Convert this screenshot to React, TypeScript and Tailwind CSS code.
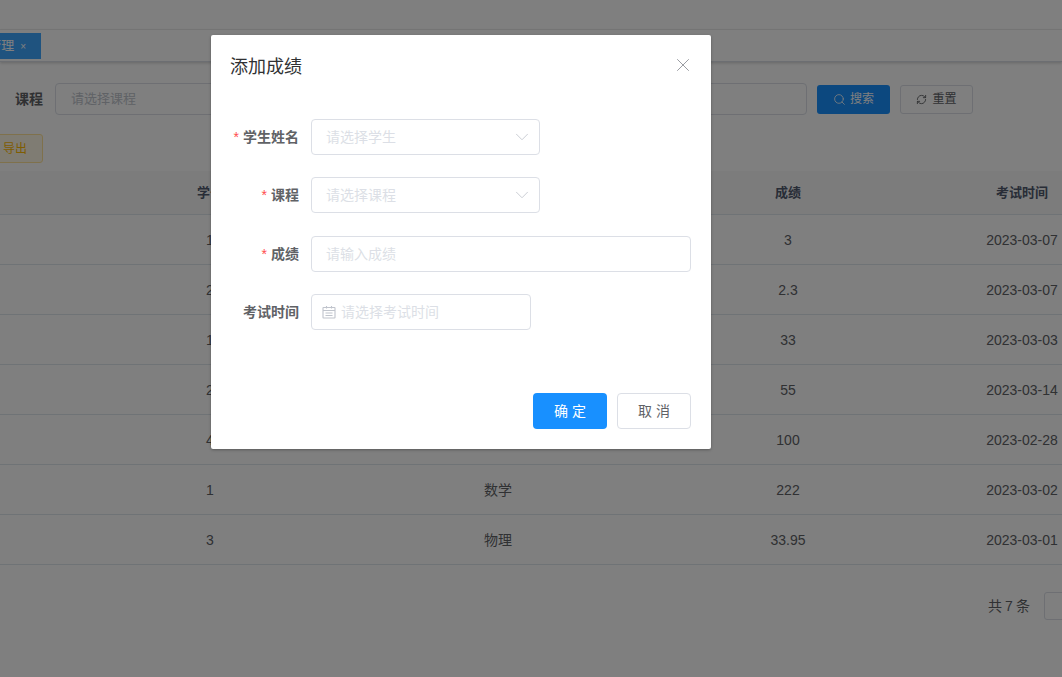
import { ChevronDown, X, Search, RefreshCw } from "lucide-react";

const rows = [
  { id: "1", course: "", score: "3", date: "2023-03-07" },
  { id: "2", course: "", score: "2.3", date: "2023-03-07" },
  { id: "1", course: "", score: "33", date: "2023-03-03" },
  { id: "2", course: "", score: "55", date: "2023-03-14" },
  { id: "4", course: "", score: "100", date: "2023-02-28" },
  { id: "1", course: "数学", score: "222", date: "2023-03-02" },
  { id: "3", course: "物理", score: "33.95", date: "2023-03-01" },
];

const gridCols = "grid grid-cols-[66px_288px_288px_292px_176px] items-center text-center";

const FormRow = ({
  label,
  required,
  className,
  children,
}: {
  label: string;
  required?: boolean;
  className: string;
  children: React.ReactNode;
}) => (
  <div className={`flex items-center ${className}`}>
    <label className="w-[88px] shrink-0 pr-3 text-right text-[14px] font-bold text-[#606266]">
      {required && <span className="mr-1 font-normal text-[#ff4d4f]">*</span>}
      {label}
    </label>
    {children}
  </div>
);

const DateIcon = () => (
  <svg width="14" height="14" viewBox="0 0 14 14" fill="none" stroke="#c0c4cc" strokeWidth="1.1" className="mr-[5px] shrink-0">
    <rect x="1" y="2.5" width="12" height="10.5" rx="0.5" />
    <path d="M1 5.5h12M4.5 1v2.5M9.5 1v2.5M3.5 8h7M3.5 10.5h7" />
  </svg>
);

export default function App() {
  return (
    <div className="relative h-[677px] w-[1062px] overflow-hidden bg-white font-['Liberation_Sans','Noto_Sans_CJK_SC',sans-serif] text-[14px] text-[#606266]">
      <div className="h-[30px] border-b border-[#f0f0f0]" />
      <div className="flex h-[32px] items-start border-b border-[#d8dce5] pt-[3px] shadow-[0_1px_3px_rgba(0,0,0,0.2)]">
        <div className="-ml-[42px] flex h-[26px] w-[83px] items-center justify-end whitespace-nowrap bg-[#3ea6ff] pr-[15px] text-[13px] text-white">
          成绩管理<span className="ml-[6px] text-[10px]">×</span>
        </div>
      </div>

      <div className="flex h-[72px] items-center pl-[15px] pt-[2px]">
        <span className="mr-3 text-[14px] font-bold text-[#606266]">课程</span>
        <div className="flex h-[32px] w-[752px] items-center rounded border border-[#dcdfe6] pl-[15px] text-[13px] text-[#c0c4cc]">
          请选择课程
        </div>
        <button className="ml-[10px] flex h-[29px] w-[73px] items-center justify-center gap-[4px] rounded-[3px] bg-[#1890ff] text-[12px] text-white">
          <Search size={13} strokeWidth={1.5} />
          搜索
        </button>
        <button className="ml-[10px] flex h-[29px] w-[73px] items-center justify-center gap-[5px] rounded-[3px] border border-[#dcdfe6] text-[12px] text-[#606266]">
          <RefreshCw size={11} />
          重置
        </button>
      </div>

      <div className="-ml-[30px] flex h-[29px] w-[73px] items-center justify-end rounded-[3px] border border-[#ffe399] bg-[#fff8e6] pr-[15px] text-[12px] text-[#ffba00]">
        导出
      </div>

      <div className="mt-[8px]">
        <div className={`${gridCols} h-[44px] border-b border-[#dfe6ec] bg-[#f8f8f9] text-[13px] font-bold text-[#515a6e]`}>
          <span />
          <span>学号</span>
          <span>课程</span>
          <span>成绩</span>
          <span>考试时间</span>
        </div>
        {rows.map((row, i) => (
          <div key={i} className={`${gridCols} h-[50px] border-b border-[#dfe6ec] pt-[2px] text-[14px] text-[#606266]`}>
            <span />
            <span>{row.id}</span>
            <span>{row.course}</span>
            <span>{row.score}</span>
            <span>{row.date}</span>
          </div>
        ))}
      </div>

      <div className="mt-[27px] flex items-center whitespace-nowrap pl-[988px] text-[14px]">
        <span className="shrink-0 tracking-[-0.4px]">共 7 条</span>
        <div className="ml-[14px] h-[28px] w-[60px] shrink-0 rounded-[3px] border border-[#dcdfe6]" />
      </div>

      <div className="absolute inset-0 bg-black/50" />

      <div className="absolute left-[211px] top-[35px] flex h-[414px] w-[500px] flex-col rounded-[2px] bg-white px-5 shadow-[0_1px_3px_rgba(0,0,0,0.3)]">
        <div className="flex h-[62px] items-center justify-between">
          <span className="-ml-[1px] pt-[2px] text-[18px] leading-6 text-[#303133]">添加成绩</span>
          <X size={22} strokeWidth={1} className="-mr-[3px] -mt-[2px] text-[#909399]" />
        </div>
        <div className="-ml-[8px] mt-[22px] flex flex-col">
          <FormRow label="学生姓名" required className="h-[36px]">
            <div className="flex h-[36px] w-[229px] items-center justify-between rounded border border-[#dcdfe6] pl-[14px] pr-[6px] text-[#dcdfe6]">
              请选择学生
              <ChevronDown size={22} strokeWidth={0.9} className="text-[#c0c4cc]" />
            </div>
          </FormRow>
          <FormRow label="课程" required className="mt-[22px] h-[36px]">
            <div className="flex h-[36px] w-[229px] items-center justify-between rounded border border-[#dcdfe6] pl-[14px] pr-[6px] text-[#dcdfe6]">
              请选择课程
              <ChevronDown size={22} strokeWidth={0.9} className="text-[#c0c4cc]" />
            </div>
          </FormRow>
          <FormRow label="成绩" required className="mt-[23px] h-[36px]">
            <div className="flex h-[36px] w-[380px] items-center rounded border border-[#dcdfe6] pl-[14px] text-[#dcdfe6]">
              请输入成绩
            </div>
          </FormRow>
          <FormRow label="考试时间" className="mt-[22px] h-[36px]">
            <div className="flex h-[36px] w-[220px] items-center rounded border border-[#dcdfe6] pl-[10px] text-[#dcdfe6]">
              <DateIcon />
              请选择考试时间
            </div>
          </FormRow>
        </div>
        <div className="mt-auto mb-[20px] flex justify-end gap-[10px]">
          <button className="h-[36px] w-[74px] rounded bg-[#1890ff] text-[14px] text-white">确 定</button>
          <button className="h-[36px] w-[74px] rounded border border-[#dcdfe6] text-[14px] text-[#606266]">取 消</button>
        </div>
      </div>
    </div>
  );
}
